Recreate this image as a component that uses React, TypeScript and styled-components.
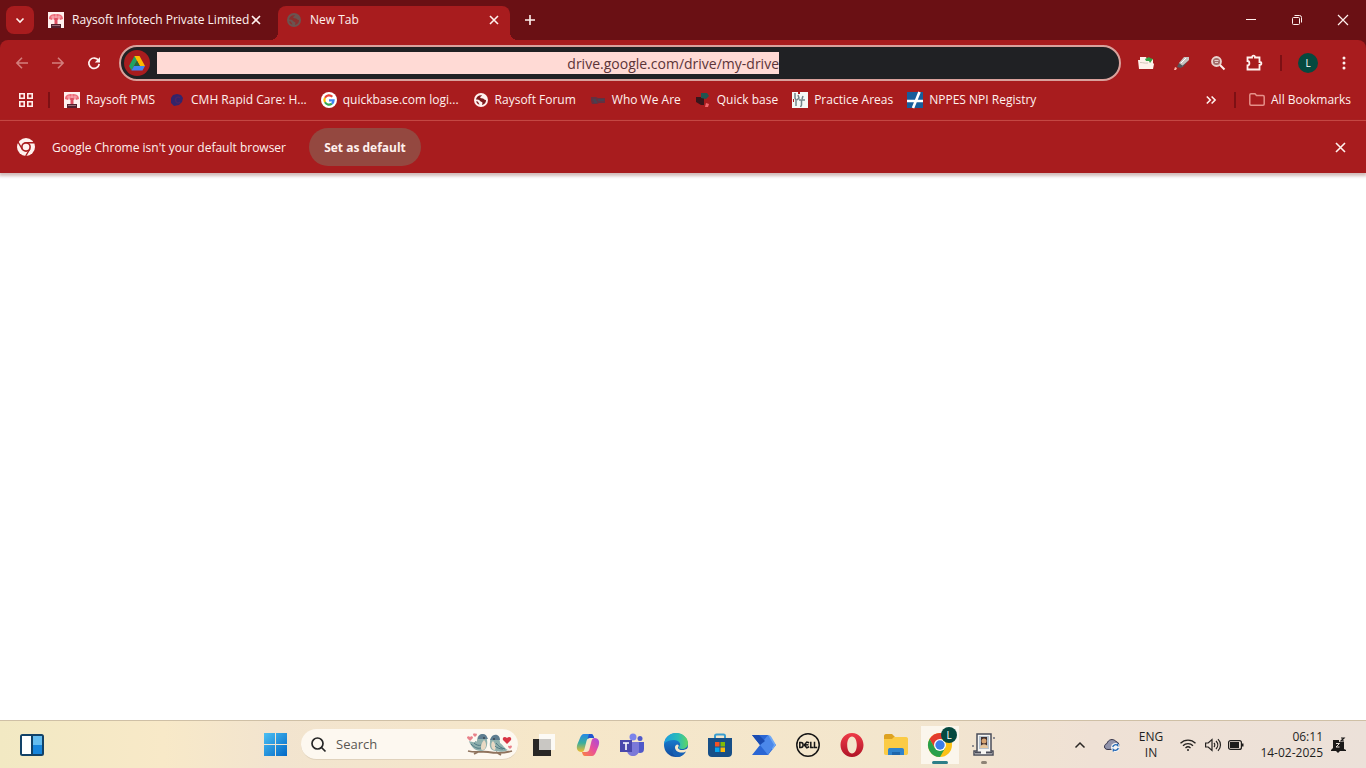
import React from "react";
import styled, { createGlobalStyle } from "styled-components";

const Global = createGlobalStyle`
  * { box-sizing: border-box; }
  body { margin: 0; background: #fff; font-family: "Open Sans", "Noto Sans", sans-serif; font-size: 12px; }
  button, input { font: inherit; color: inherit; border: 0; padding: 0; margin: 0; background: none; }
  svg { display: block; flex: none; overflow: visible; }
`;

const Screen = styled.div`
  min-height: 100vh;
  display: flex;
  flex-direction: column;
`;

const Chrome = styled.header`
  background: #6a1014;
  color: #fff1ee;
`;

const TabStrip = styled.div`
  display: flex;
  align-items: center;
  height: 40px;
  padding-left: 6px;
`;

const TabSearch = styled.button`
  width: 28px;
  height: 28px;
  border-radius: 8px;
  background: #a81c1e;
  display: grid;
  place-items: center;
`;

const Tab = styled.div<{ $active?: boolean }>`
  position: relative;
  align-self: flex-end;
  width: ${(p) => (p.$active ? 232 : 238)}px;
  margin-left: ${(p) => (p.$active ? 0 : 6)}px;
  height: 34px;
  padding: ${(p) => (p.$active ? "0 8px 6px" : "0 14px 6px 8px")};
  display: flex;
  align-items: center;
  gap: 8px;
  border-radius: 8px 8px 0 0;
  background: ${(p) => (p.$active ? "#a81c1e" : "transparent")};
  ${(p) =>
    p.$active &&
    `&::before, &::after {
      content: "";
      position: absolute;
      bottom: 0;
      width: 8px;
      height: 8px;
    }
    &::before { left: -8px; background: radial-gradient(circle at 0 0, transparent 8px, #a81c1e 8px); }
    &::after { right: -8px; background: radial-gradient(circle at 100% 0, transparent 8px, #a81c1e 8px); }`}
`;

const TabTitle = styled.span`
  flex: 1;
  min-width: 0;
  white-space: nowrap;
  line-height: 16px;
`;

const IconButton = styled.button<{ $w?: number; $dim?: boolean }>`
  width: ${(p) => p.$w ?? 16}px;
  height: 28px;
  flex: none;
  display: grid;
  place-items: center;
  opacity: ${(p) => (p.$dim ? 0.5 : 1)};
`;

const WindowControls = styled.div`
  margin-left: auto;
  display: flex;
`;

const Toolbar = styled.div`
  display: flex;
  align-items: center;
  height: 46px;
  padding: 0 5px 0 4px;
  background: #a81c1e;
  border-radius: 8px 8px 0 0;
`;

const Omnibox = styled.div`
  flex: 1;
  height: 36px;
  margin: 0 7px;
  padding-left: 3px;
  display: flex;
  align-items: center;
  gap: 7px;
  border: 2px solid #d9a19c;
  border-radius: 18px;
  background: #202124;
`;

const SiteIcon = styled.span`
  width: 26px;
  height: 26px;
  flex: none;
  border-radius: 50%;
  background: #a81c1e;
  display: grid;
  place-items: center;
`;

const Address = styled.input`
  flex: 0 1 622px;
  min-width: 0;
  height: 22px;
  background: #ffdad5;
  color: #5c3438;
  font-size: 14px;
  text-align: right;
  outline: none;
`;

const Divider = styled.span`
  width: 2px;
  height: 16px;
  flex: none;
  background: #7d1014;
`;

const Avatar = styled.span`
  width: 20px;
  height: 20px;
  border-radius: 50%;
  background: #05493f;
  color: #fff;
  font-size: 10px;
  line-height: 20px;
  text-align: center;
`;

const Bookmarks = styled.nav`
  display: flex;
  align-items: center;
  height: 35px;
  padding: 0 15px 7px 18px;
  background: #a81c1e;
  border-bottom: 1px solid #c7403c;
`;

const BookmarkList = styled.div`
  display: flex;
  align-items: center;
  gap: 14px;
  margin-right: auto;
`;

const Bookmark = styled.a`
  display: flex;
  align-items: center;
  gap: 6px;
  color: inherit;
  text-decoration: none;
  white-space: nowrap;
  line-height: 16px;
`;

const InfoBar = styled.div`
  position: relative;
  display: flex;
  align-items: center;
  height: 52px;
  padding: 0 18px 0 17px;
  background: #a81c1e;
  box-shadow: 0 2px 3px 1px #b08f8b99;
`;

const InfoText = styled.span`
  width: 241px;
  margin: 0 16px 0 17px;
  white-space: nowrap;
`;

const DefaultButton = styled.button`
  width: 112px;
  height: 38px;
  margin-right: auto;
  border-radius: 19px;
  background: #944840;
  font-weight: 700;
`;

const Page = styled.main`
  flex: 1;
`;

const Taskbar = styled.footer`
  display: flex;
  align-items: center;
  height: 48px;
  border-top: 1px solid #cfc0a6;
  color: #1f1f1f;
  background: linear-gradient(90deg, #f2e9c3, #f8e9c8 12%, #f2e4cf 20%, #f6e7c9 40%, #f3e6cd 65%, #efe1d5 80%, #ece1d9);
`;

const Widgets = styled.div`
  flex: 1;
  padding-left: 10px;
`;

const TaskGroup = styled.div`
  display: flex;
  align-items: center;
`;

const TaskButton = styled.button<{ $active?: boolean; $mark?: string }>`
  position: relative;
  width: 44px;
  height: 46px;
  display: grid;
  place-items: center;
  ${(p) => p.$active && "background: linear-gradient(#fbf6ec, #fbf6ec) center / 38px 38px no-repeat;"}
  ${(p) =>
    p.$mark &&
    `&::after {
      content: "";
      position: absolute;
      left: 50%;
      bottom: 4px;
      width: ${p.$active ? 16 : 6}px;
      height: 3px;
      border-radius: 2px;
      background: ${p.$mark};
      transform: translateX(-50%);
    }`}
`;

const SearchBox = styled.label`
  width: 217px;
  height: 31px;
  margin: 0 4px;
  padding: 0 4px 0 10px;
  display: flex;
  align-items: center;
  gap: 10px;
  border-radius: 16px;
  background: #fdf8f0;
  border-bottom: 1px solid #e0d2bc;
`;

const SearchInput = styled.input`
  flex: 1;
  min-width: 0;
  font-size: 13px;
  outline: none;
  &::placeholder { color: #5a5752; opacity: 1; }
`;

const Tray = styled.div`
  flex: 0 0 360px;
  display: flex;
  align-items: center;
  justify-content: flex-end;
  padding-right: 20px;
`;

const TrayItem = styled.button<{ $w: number; $right?: boolean }>`
  width: ${(p) => p.$w}px;
  display: grid;
  justify-items: ${(p) => (p.$right ? "end" : "center")};
  line-height: 16px;
  white-space: nowrap;
`;

const Cross = ({ size = 8, w = 1.6 }: { size?: number; w?: number }) => (
  <svg width={size} height={size} viewBox="0 0 8 8" stroke="#fff1ee" strokeWidth={(w * 8) / size}>
    <path d="M0 0 8 8M8 0 0 8" />
  </svg>
);

const RaysoftIcon = () => (
  <svg width="16" height="16" viewBox="0 0 16 16">
    <path fill="#fff0ee" d="M0 0h16v16H0z" />
    <path fill="#ee6a78" d="M1 7C1 3 4 2 8 2s7 1 7 5l-3 1-1-2-1 2H6L5 6 4 8z" />
    <path d="M3 5h10M5 3.500v4M8 2v8M11 3.500v4" stroke="#f9b9bf" strokeWidth=".8" />
    <path fill="#dc4f62" d="M6.500 6h3v6h-3z" />
    <path fill="#51202e" d="M3 12h10v4H3z" />
    <path d="M4 13.500h8" stroke="#9a6b77" />
  </svg>
);

const Globe = ({ fill, land }: { fill: string; land: string }) => (
  <svg width="16" height="16" viewBox="0 0 16 16">
    <circle cx="8" cy="8" r="7" fill={fill} />
    <path fill={land} d="M9 3.200C8.500 4.500 7 4.500 7.200 5.600c.2.900 1.600.7 2.600.9 1.200.3 1.200 1.500 3.200 1.400.2 2.500-1.500 4.500-3.800 5-.4-1 .6-1.500.2-2.400-.5-1-2-.7-2.600-1.800C6.200 7.500 5 7.600 3 7.500 3.200 4.800 5.800 2.700 9 3.200z" />
    <path fill={land} d="M3.200 9.300c1 0 2 .4 2.200 1.300.2.900 1 1.200 1.100 2-1.600-.3-3-1.600-3.300-3.300z" />
  </svg>
);

const CmhIcon = () => (
  <svg width="16" height="16" viewBox="0 0 16 16">
    <path fill="#33246b" d="M2 6 4 3l4-1 4 1 2 3-1 4-3 3-5 1-3-3z" />
    <path d="M11 6C9 4 6.500 5.500 6.500 8s2.500 4 4.500 2" stroke="#4c2462" strokeWidth="1.500" fill="none" />
  </svg>
);

const GoogleIcon = () => (
  <svg width="16" height="16" viewBox="0 0 16 16">
    <circle cx="8" cy="8" r="8" fill="#fff" />
    <g fill="none" strokeWidth="2.200">
      <path stroke="#ea4335" d="M4 5.700a4.600 4.600 0 0 1 7.300-.9" />
      <path stroke="#fbbc05" d="M4 5.700a4.600 4.600 0 0 0 0 4.600" />
      <path stroke="#34a853" d="M4 10.300a4.600 4.600 0 0 0 6.900 1.300" />
      <path stroke="#4285f4" d="M8 8.300h4.600c0 1.300-.6 2.500-1.700 3.300" />
    </g>
  </svg>
);

const WhoIcon = () => (
  <svg width="16" height="16" viewBox="0 0 16 16">
    <path fill="#633040" d="M1 5h5l2 1h7v5H9l-2 1H2l-1-3z" />
    <path d="M3 8h3M8 8h6M4 10h3" stroke="#3f4755" strokeWidth="1.500" />
  </svg>
);

const QuickIcon = () => (
  <svg width="16" height="16" viewBox="0 0 16 16">
    <path fill="#38161b" d="M1 5h8v8H6L1 10z" />
    <path fill="#1f5550" d="M6 1h6l2 3-3 3-5-1z" />
    <path fill="#f2666c" d="m11 11 3 1-1 3h-3z" />
  </svg>
);

const PracticeIcon = () => (
  <svg width="16" height="16" viewBox="0 0 16 16">
    <path fill="#f4f8f6" d="M0 0h16v16H0z" />
    <path d="M3 1v5l1 2v6M6 3l1 3-2 2M7 8h6M9.500 8v5l-1 2M11 4l-1 3" stroke="#73858a" strokeWidth="1.500" fill="none" />
    <path fill="#a81c1e" d="M6 0h2v2H6zM1 7h1v3H1z" />
  </svg>
);

const NppesIcon = () => (
  <svg width="16" height="16" viewBox="0 0 16 16">
    <path fill="#175d9b" d="M0 0h16v16H0z" />
    <path d="M0 9h16M12.500 0 6 16" stroke="#fff" strokeWidth="2.600" />
  </svg>
);

const ChromeOutline = () => (
  <svg width="18" height="18" viewBox="0 0 18 18">
    <circle cx="9" cy="9" r="9" fill="#fff1ee" />
    <circle cx="9" cy="9" r="4.900" fill="#a81c1e" />
    <path d="M8.500 4.700H17M5.600 11.600 1 4M12.900 10.900 8.700 18" stroke="#a81c1e" strokeWidth="1.400" />
    <circle cx="9" cy="9" r="3.300" fill="#fff1ee" />
  </svg>
);

const bookmarks: [string, React.ReactNode][] = [
  ["Raysoft PMS", <RaysoftIcon />],
  ["CMH Rapid Care: H...", <CmhIcon />],
  ["quickbase.com logi...", <GoogleIcon />],
  ["Raysoft Forum", <Globe fill="#fff1ee" land="#7b1a1d" />],
  ["Who We Are", <WhoIcon />],
  ["Quick base", <QuickIcon />],
  ["Practice Areas", <PracticeIcon />],
  ["NPPES NPI Registry", <NppesIcon />],
];

const Birds = () => (
  <svg width="48" height="24" viewBox="0 0 48 24">
    <path d="M2 19c8 2 14 0 20 1s14 2 24-1M30 20l5 3M12 20l-4 2" stroke="#8f735d" strokeWidth="1.800" fill="none" />
    <path fill="#8fb0ad" d="M3 9c3 1 6 2 8 0 0-4 2-7 5-7 4 0 5 3 5 6 1 5-1 11-6 11-6 0-10-4-12-10z" />
    <path fill="#e9d9c4" d="M18 8c3 2 3 10-2 10-2-1-1-7 2-10z" />
    <path d="M5 12c3 3 6 5 10 4M8 11c2 2 5 3 7 2" stroke="#4e7984" fill="none" />
    <path fill="#5f7d90" d="M12 7c0-5 7-7 9-2l1 2h-4z" />
    <path fill="#8fb0ad" d="M42 18c-3-1-5-5-8-7 0-4-2-7-5-7-4 0-5 3-5 6-1 5 1 9 6 9 5 1 8 1 12-1z" />
    <path fill="#e9d9c4" d="M27 9c-3 2-2 9 2 9 1-2 1-6-2-9z" />
    <path d="M30 11c2 3 5 5 9 6M29 14c2 2 5 3 8 3" stroke="#4e7984" fill="none" />
    <path fill="#5f7d90" d="M34 8c0-6-7-7-9-2l-1 2h4z" />
    <circle cx="18" cy="6" r=".8" fill="#222" /><circle cx="28" cy="7" r=".8" fill="#222" />
    <path fill="#d93444" d="m41 12-4-4c-1-3 2-4 4-2 2-2 5-1 4 2z" />
    <path fill="#e9818a" d="m4 9-3-3c0-2 2-2 3-1 1-1 3-1 3 1zM9 5 7 3c0-2 2-2 2-1 1-1 2 0 2 1zM44 17l-2-2c0-2 2-1 2-1 1-1 2 0 2 1z" />
  </svg>
);

const ChromeLogo = () => (
  <svg width="32" height="32" viewBox="0 0 32 32">
    <circle cx="16" cy="16" r="12" fill="#fbc116" />
    <path fill="#e33b2e" d="M5.600 10A12 12 0 0 1 26.400 10H16l-5.200 9z" />
    <path fill="#29a04b" d="M5.600 10A12 12 0 0 0 16 28l5.200-9h-10.400z" />
    <circle cx="16" cy="16" r="6" fill="#fff" />
    <circle cx="16" cy="16" r="4.700" fill="#3b7de9" />
    <circle cx="25" cy="6" r="8" fill="#05493f" />
    <text x="25" y="10" fontSize="10" textAnchor="middle" fill="#fff">L</text>
  </svg>
);

const apps: { name: string; art: React.ReactNode; active?: boolean; mark?: string }[] = [
  {
    name: "Task view",
    art: (
      <svg width="24" height="24" viewBox="0 0 24 24">
        <path fill="#fcfaf5" d="M7 1h16v16H7z" />
        <path fill="#292725" d="M1 6h18v17H1z" />
        <path fill="#c9c7c3" d="M7 6h12v11H7z" />
      </svg>
    ),
  },
  {
    name: "Copilot",
    art: (
      <svg width="24" height="24" viewBox="0 0 24 24">
        <defs>
          <linearGradient id="cpa" x1="0" y1="0" x2="0" y2="1"><stop stopColor="#2589e8" /><stop offset=".5" stopColor="#39ae9c" /><stop offset="1" stopColor="#f3bd2c" /></linearGradient>
          <linearGradient id="cpb" x1="1" y1="0" x2="0" y2="1"><stop stopColor="#a34ae0" /><stop offset=".5" stopColor="#e9509a" /><stop offset="1" stopColor="#fb853d" /></linearGradient>
        </defs>
        <path fill="url(#cpa)" d="M8 1h7c2 0 2.500 2 3 4h-4c-2 0-3 1-3.500 3L8.500 16c-.5 2-1.500 3-3 3C1 19 0 15 1.500 11L4 5c.8-2 2-4 4-4z" />
        <path fill="url(#cpb)" d="M16 23H9c-2 0-2.500-2-3-4h4c2 0 3-1 3.500-3l2-8c.5-2 1.500-3 3-3 4.500 0 5.500 4 4 8L20 19c-.8 2-2 4-4 4z" />
        <path fill="#2155cf" d="M13 1h2c2 0 2.500 2 3.200 4H14c-1 0-2 .5-2.500 1z" />
      </svg>
    ),
  },
  {
    name: "Teams",
    art: (
      <svg width="24" height="24" viewBox="0 0 24 24">
        <circle cx="13" cy="4" r="3.500" fill="#7b83eb" />
        <circle cx="20" cy="5.500" r="2.500" fill="#5059c9" />
        <path fill="#5059c9" d="M16 9h8v7c0 3-2 4-4 4s-4-1-4-4z" />
        <path fill="#7b79d8" d="M7 9h12v8c0 4-3 6-6 6s-6-2-6-6z" />
        <path fill="#4a48ac" d="M0 7h12v12H0z" />
        <path d="M3 10h6M6 10v7" stroke="#fff" strokeWidth="1.600" />
      </svg>
    ),
  },
  {
    name: "Edge",
    art: (
      <svg width="24" height="24" viewBox="0 0 24 24">
        <defs>
          <linearGradient id="ea" x1="0" x2="1"><stop stopColor="#1b9de2" /><stop offset=".6" stopColor="#2bbdb5" /><stop offset="1" stopColor="#5fd660" /></linearGradient>
          <linearGradient id="eb" x1="0" y1="0" x2="0" y2="1"><stop stopColor="#1b8ee0" /><stop offset="1" stopColor="#124a9d" /></linearGradient>
        </defs>
        <circle cx="12" cy="12" r="12" fill="url(#eb)" />
        <path fill="url(#ea)" d="M0 11C1 4 6 0 12 0c7 0 12 5 12 10 0 4-3 6-6 6-2 0-4-1-3-2 3-3 0-7-5-7-4 0-8 1-10 4z" />
        <path fill="#f6e8cc" d="M14.500 13.500C13 15 15 17 18 17c2 0 4-.5 6-2v3l-4 3C14 21 10 18 11 14c.2-1 1-2 2-2.500 1.500.3 2 1.300 1.500 2z" />
        <path fill="#1761b5" d="M11 14c0 4 3 5.500 7 5.500 2 0 3-.5 4-1-2 3.500-5 5.500-9 5.500-5-2-6-6-2-10z" />
      </svg>
    ),
  },
  {
    name: "Microsoft Store",
    art: (
      <svg width="24" height="24" viewBox="0 0 24 24">
        <path d="M7 7V3c0-1 .5-1.500 1.500-1.500h7C16.500 1.500 17 2 17 3v4" stroke="#3a9ed0" strokeWidth="2" fill="none" />
        <path fill="#174f87" d="M0 5h24v15c0 2.500-1.500 4-4 4H4c-2.500 0-4-1.500-4-4z" />
        <path fill="#f35325" d="M7 9h4.500v4.500H7z" /><path fill="#81bc06" d="M12.500 9H17v4.500h-4.500z" />
        <path fill="#05a6f0" d="M7 14.500h4.500V19H7z" /><path fill="#ffba08" d="M12.500 14.500H17V19h-4.500z" />
      </svg>
    ),
  },
  {
    name: "Power Automate",
    art: (
      <svg width="24" height="22" viewBox="0 0 24 22">
        <path fill="#2a66d4" d="M0 1h16l8 10-8 10H0l8-10z" />
        <path fill="#6fa8f5" d="M16 1c2 0 3 1 4 3l4 7-4 5z" />
        <path fill="#4b88ea" d="m8 11 8-10 6 10-6 10z" />
        <path fill="#1a4cb2" d="M0 1h7l6 6-5 4z" />
      </svg>
    ),
  },
  {
    name: "Dell",
    art: (
      <svg width="24" height="24" viewBox="0 0 24 24">
        <circle cx="12" cy="12" r="11.200" fill="none" stroke="#161616" strokeWidth="1.500" />
        <g fill="none" stroke="#161616" strokeWidth="1.500">
          <path d="M3.800 9.500v5H5c2.800 0 2.800-5 0-5zM14.800 8.800v5.700h2.700M18.500 8.800v5.700h2.700" />
          <path d="M13.200 9.800 10.800 9 8.200 12l2.600 2.800 2.400-1M8.500 12l4-.2" />
        </g>
      </svg>
    ),
  },
  {
    name: "Opera",
    art: (
      <svg width="24" height="24" viewBox="0 0 24 24">
        <defs><linearGradient id="op" x1="0" y1="0" x2="0" y2="1"><stop stopColor="#ef3b48" /><stop offset="1" stopColor="#b01427" /></linearGradient></defs>
        <path fill="url(#op)" fillRule="evenodd" d="M12 0C5 0 .5 6 .5 12S5 24 12 24s11.500-6 11.500-12S19 0 12 0zm0 3.500c3 0 4.800 4 4.800 8.500s-1.800 8.500-4.800 8.500S7.200 16.500 7.200 12 9 3.500 12 3.500z" />
      </svg>
    ),
  },
  {
    name: "File Explorer",
    art: (
      <svg width="26" height="24" viewBox="0 0 26 24">
        <path fill="#dda222" d="M1 3c0-1 .5-2 2-2h6l3 3v4H1z" />
        <path fill="#fbcb45" d="M1 6h8l2-2h12c1.500 0 2 1 2 2v14c0 1.500-1 2-2 2H3c-1.500 0-2-1-2-2z" />
        <path fill="#2f83cc" d="M5 22v-5c0-1.500 1-2 2-2h12c1.500 0 2 1 2 2v5z" />
        <path fill="#1d66ab" d="M9 19h8v3H9z" />
      </svg>
    ),
  },
  { name: "Google Chrome", art: <ChromeLogo />, active: true, mark: "#2c7f88" },
  {
    name: "Portrait viewer",
    mark: "#8d8375",
    art: (
      <svg width="24" height="24" viewBox="0 0 24 24">
        <path fill="#f6f5f2" stroke="#4b4d59" strokeWidth="1.500" d="M5 1h14v17h2v4H2v-4h3z" />
        <path fill="#b7c3ce" d="M7 3h10v13H7z" />
        <path fill="#41302f" d="M9 4h6v10H9z" />
        <circle cx="12" cy="8" r="2.500" fill="#d9a572" />
        <path fill="#e6c69c" d="M8 15c0-5 8-5 8 0z" />
        <path d="M3 19.500h6M14 19.500h6" stroke="#4b4d59" strokeWidth="2" />
        <path d="M22 4v2M1 12v2" stroke="#6d707c" strokeWidth="1.500" />
      </svg>
    ),
  },
];

export default function App() {
  return (
    <Screen>
      <Global />
      <Chrome>
        <TabStrip>
          <TabSearch aria-label="Search tabs">
            <svg width="8" height="5" viewBox="0 0 8 5" fill="none" stroke="#fff1ee" strokeWidth="1.600"><path d="m.5.5 3.500 3.500L7.500.5" /></svg>
          </TabSearch>
          <Tab>
            <RaysoftIcon />
            <TabTitle>Raysoft Infotech Private Limited</TabTitle>
            <IconButton aria-label="Close tab"><Cross /></IconButton>
          </Tab>
          <Tab $active>
            <Globe fill="#6b5450" land="#8a302e" />
            <TabTitle>New Tab</TabTitle>
            <IconButton aria-label="Close tab"><Cross /></IconButton>
          </Tab>
          <IconButton $w={40} aria-label="New tab">
            <svg width="10" height="10" viewBox="0 0 10 10" stroke="#fff1ee" strokeWidth="1.600"><path d="M5 0v10M0 5h10" /></svg>
          </IconButton>
          <WindowControls>
            <IconButton $w={46} aria-label="Minimize">
              <svg width="10" height="10" viewBox="0 0 10 10" stroke="#fff1ee"><path d="M0 4.500h10" /></svg>
            </IconButton>
            <IconButton $w={46} aria-label="Restore">
              <svg width="10" height="10" viewBox="0 0 10 10" fill="none" stroke="#fff1ee"><rect x=".5" y="2.500" width="7" height="7" rx="1" /><path d="M2.500.5h5a2 2 0 0 1 2 2v5" /></svg>
            </IconButton>
            <IconButton $w={46} aria-label="Close"><Cross size={10} w={1.2} /></IconButton>
          </WindowControls>
        </TabStrip>
        <Toolbar>
          <IconButton $w={36} $dim aria-label="Back">
            <svg width="12" height="12" viewBox="0 0 12 12" fill="none" stroke="#ffe0da" strokeWidth="1.600"><path d="M12 6H1M6 .8.900 6 6 11.200" /></svg>
          </IconButton>
          <IconButton $w={36} $dim aria-label="Forward">
            <svg width="12" height="12" viewBox="0 0 12 12" fill="none" stroke="#ffe0da" strokeWidth="1.600"><path d="M0 6h11M6 .8 11.100 6 6 11.200" /></svg>
          </IconButton>
          <IconButton $w={36} aria-label="Reload">
            <svg width="12" height="12" viewBox="0 0 12 12"><path d="M10.500 3.500A5.200 5.200 0 1 0 11.200 7" fill="none" stroke="#fff1ee" strokeWidth="1.700" /><path fill="#fff1ee" d="M12 0v5.500H6.800z" /></svg>
          </IconButton>
          <Omnibox>
            <SiteIcon>
              <svg width="16" height="15" viewBox="0 0 16 15">
                <path fill="#1fa463" d="M5.500 0h5L5 10l-2.500 4.500L0 10z" />
                <path fill="#ffba00" d="M5.500 0h5L16 10h-5.200z" />
                <path fill="#4285f4" d="M5 10h11l-2.500 4.500h-11z" />
                <path fill="#1f6b3f" d="M8 4.800 10.900 10H5.200z" />
              </svg>
            </SiteIcon>
            <Address aria-label="Address" defaultValue="drive.google.com/drive/my-drive" />
          </Omnibox>
          <IconButton $w={36} aria-label="Drive files">
            <svg width="16" height="14" viewBox="0 0 16 14">
              <path fill="#fff1ea" d="M0 4h2V1h6l1 2h6v4l1 1-1 5H1z" />
              <path d="M2 6.500c4 0 4 1 8 .5" stroke="#d5c6bb" fill="none" />
              <path fill="#37a044" d="m7 3 4-2 1 1 3 1-3 4-1-2-3 0z" />
            </svg>
          </IconButton>
          <IconButton $w={36} aria-label="Highlighter">
            <svg width="16" height="14" viewBox="0 0 16 14">
              <path fill="#c9c2bf" d="M10 1h5v3L8 11H5V7z" />
              <path fill="#55565b" d="m5 7 4 3-2 2-4-1zM14 5l-5 6-1-1z" />
              <path fill="#ffb0a6" d="m1 11 2 1-1 2H0z" />
              <path d="M7 7l5-5" stroke="#fff" />
            </svg>
          </IconButton>
          <IconButton $w={36} aria-label="Zoom">
            <svg width="14" height="14" viewBox="0 0 14 14" fill="none">
              <circle cx="5.500" cy="5.500" r="4.500" fill="#a46f6c" stroke="#ead4cf" strokeWidth="1.800" />
              <path d="m9 9 4.500 4.500" stroke="#fff1ee" strokeWidth="2" /><path d="M3.500 4.500h4M4 6.500h3" stroke="#e6cfcc" />
            </svg>
          </IconButton>
          <IconButton $w={36} aria-label="Extensions">
            <svg width="16" height="16" viewBox="0 0 16 16" fill="none" stroke="#fff1ee" strokeWidth="1.800">
              <path d="M1.500 2.500H6c0-2.500 3-2.500 3 0h4.500V7c2.500 0 2.500 3 0 3v4.500h-12v-4C4 10.500 4 6 1.500 6z" />
            </svg>
          </IconButton>
          <IconButton $w={17} as="span"><Divider /></IconButton>
          <IconButton $w={38} aria-label="Profile"><Avatar>L</Avatar></IconButton>
          <IconButton $w={34} aria-label="Menu">
            <svg width="4" height="14" viewBox="0 0 4 14" fill="#fff1ee"><circle cx="2" cy="2" r="1.500" /><circle cx="2" cy="7" r="1.500" /><circle cx="2" cy="12" r="1.500" /></svg>
          </IconButton>
        </Toolbar>
        <Bookmarks aria-label="Bookmarks">
          <IconButton aria-label="Apps">
            <svg width="14" height="14" viewBox="0 0 14 14" fill="none" stroke="#fff1ee" strokeWidth="1.600">
              <path d="M.8.800h4.400v4.400H.8zM8.800.8h4.400v4.400H8.800zM.8 8.800h4.400v4.400H.8zM8.800 8.800h4.400v4.400H8.800z" />
            </svg>
          </IconButton>
          <IconButton $w={30} as="span"><Divider /></IconButton>
          <BookmarkList>
            {bookmarks.map(([label, icon]) => (
              <Bookmark href="#" key={label}>{icon}{label}</Bookmark>
            ))}
          </BookmarkList>
          <IconButton $w={20} aria-label="More bookmarks">
            <svg width="10" height="8" viewBox="0 0 10 8" fill="none" stroke="#fff1ee" strokeWidth="1.600"><path d="m.8.500 3.500 3.500-3.500 3.500M5.600.5 9.100 4 5.600 7.500" /></svg>
          </IconButton>
          <IconButton $w={28} as="span"><Divider /></IconButton>
          <Bookmark href="#">
            <svg width="16" height="13" viewBox="0 0 16 13" fill="none" stroke="#e58f88" strokeWidth="1.500"><path d="M.8 2c0-.8.400-1.200 1.200-1.200h4L7.500 2.500H14c.8 0 1.200.4 1.200 1.200V11c0 .8-.4 1.200-1.200 1.200H2c-.8 0-1.200-.4-1.200-1.200z" /></svg>
            All Bookmarks
          </Bookmark>
        </Bookmarks>
        <InfoBar>
          <ChromeOutline />
          <InfoText>Google Chrome isn't your default browser</InfoText>
          <DefaultButton>Set as default</DefaultButton>
          <IconButton aria-label="Dismiss"><Cross size={9} /></IconButton>
        </InfoBar>
      </Chrome>
      <Page />
      <Taskbar>
        <Widgets>
          <TaskButton aria-label="Widgets">
            <svg width="24" height="22" viewBox="0 0 24 22">
              <rect x="1" y="1" width="22" height="20" rx="1.500" fill="#1785dc" stroke="#124268" strokeWidth="2" />
              <path fill="#fff" d="M2 2h9v18H2z" /><path fill="#65bdf0" d="M13 2h9v9h-9z" /><path d="M12 1v20" stroke="#124268" strokeWidth="2" />
            </svg>
          </TaskButton>
        </Widgets>
        <TaskGroup>
          <TaskButton aria-label="Start">
            <svg width="23" height="23" viewBox="0 0 23 23">
              <defs><linearGradient id="win" x1="0" y1="0" x2="1" y2="1"><stop stopColor="#4cc0f3" /><stop offset="1" stopColor="#0268c6" /></linearGradient></defs>
              <path fill="url(#win)" d="M0 0h11v11H0zM12 0h11v11H12zM0 12h11v11H0zM12 12h11v11H12z" />
            </svg>
          </TaskButton>
          <SearchBox>
            <svg width="15" height="15" viewBox="0 0 15 15" fill="none" stroke="#252525" strokeWidth="1.700"><circle cx="6.500" cy="6.500" r="5.500" /><path d="m10.500 10.500 4 4" /></svg>
            <SearchInput aria-label="Search" placeholder="Search" />
            <Birds />
          </SearchBox>
          {apps.map((a) => (
            <TaskButton key={a.name} aria-label={a.name} $active={a.active} $mark={a.mark}>{a.art}</TaskButton>
          ))}
        </TaskGroup>
        <Tray>
          <TrayItem $w={30} aria-label="Hidden icons">
            <svg width="10" height="6" viewBox="0 0 10 6" fill="none" stroke="#2b2825" strokeWidth="1.500"><path d="m.5 5.500 4.500-4.500 4.500 4.500" /></svg>
          </TrayItem>
          <TrayItem $w={34} aria-label="OneDrive">
            <svg width="16" height="14" viewBox="0 0 16 14">
              <path fill="#9193ab" stroke="#353348" d="M4 11.500C1 11.500 0 9.500.7 7.500 1.300 6 2.500 5.700 3 5.500 4 1.500 9 0 12 3.500c2 .5 3 2 3 4.500v3z" />
              <circle cx="11.500" cy="9.500" r="4.500" fill="#f5f3f3" />
              <path d="M8.700 9a3 3 0 0 1 5-1.500v-2M14.300 10a3 3 0 0 1-5 1.500v2" fill="none" stroke="#2569b6" strokeWidth="1.300" />
            </svg>
          </TrayItem>
          <TrayItem $w={44}><span>ENG</span><span>IN</span></TrayItem>
          <TrayItem $w={30} aria-label="Wi-Fi">
            <svg width="16" height="12" viewBox="0 0 16 12" fill="none" stroke="#242220" strokeWidth="1.300"><path d="M.5 4.200a10.500 10.500 0 0 1 15 0M3 6.700a7 7 0 0 1 10 0M5.500 9a3.600 3.600 0 0 1 5 0" /><circle cx="8" cy="11" r="1" fill="#242220" stroke="none" /></svg>
          </TrayItem>
          <TrayItem $w={20} aria-label="Volume">
            <svg width="16" height="14" viewBox="0 0 16 14" fill="none" stroke="#242220" strokeWidth="1.200"><path d="M.6 5v4h2.600L7 12.500v-11L3.200 5zM9 5c1 1 1 3 0 4M11 3c2.300 2.300 2.300 5.700 0 8M13 1.200c3.300 3.300 3.300 8.300 0 11.600" /></svg>
          </TrayItem>
          <TrayItem $w={26} aria-label="Battery">
            <svg width="16" height="10" viewBox="0 0 16 10"><rect x=".6" y=".6" width="12.800" height="8.800" rx="2" fill="none" stroke="#1d1b1a" strokeWidth="1.200" /><path fill="#1d1b1a" d="M2 2h9v6H2zM14 3.500h1.500v3H14z" /></svg>
          </TrayItem>
          <TrayItem $w={74} $right><span>06:11</span><span>14-02-2025</span></TrayItem>
          <TrayItem $w={23} $right aria-label="Notifications">
            <svg width="15" height="16" viewBox="0 0 15 16"><path fill="#1b1918" d="M2 3h6v2h5v7l2 1v1H0v-1l2-2zM5 14h4l-2 2z" /><path d="M10 1h3l-3 3h3" stroke="#1b1918" strokeWidth="1.200" fill="none" /><path d="M5 6.500h3.500L5 10h3.500" stroke="#e9dfd6" fill="none" /></svg>
          </TrayItem>
        </Tray>
      </Taskbar>
    </Screen>
  );
}
